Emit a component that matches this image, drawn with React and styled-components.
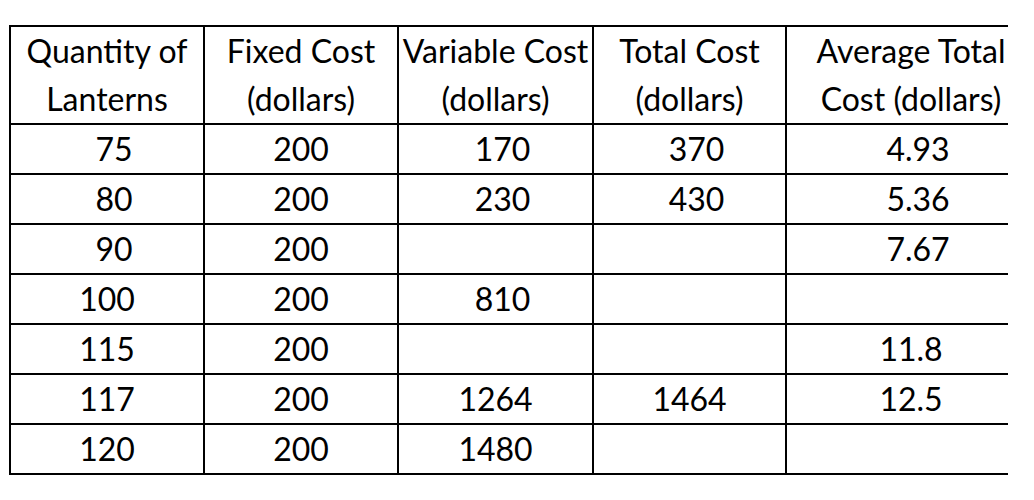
import React from "react";
import styled, { createGlobalStyle } from "styled-components";

const Global = createGlobalStyle`
  html, body { margin: 0; padding: 0; background: #ffffff; }
  body { font-family: Lato, "Open Sans", "Liberation Sans", sans-serif; color: #000; }
`;

const Frame = styled.div`
  width: 1008px;
  height: 500px;
  overflow: hidden;
  padding: 25px 0 0 9px;
  box-sizing: border-box;
`;

const Table = styled.table`
  width: 1028px;
  min-width: 1028px;
  border-collapse: separate;
  border-spacing: 0;
  border-top: 2px solid #000;
  border-left: 2px solid #000;
  table-layout: fixed;
  font-family: Lato, "Open Sans", "Liberation Sans", sans-serif;
  font-size: 32px;
  color: #000;
`;

const Col = styled.col`
  width: ${(p) => p.$w}px;
`;

const HeadCell = styled.th`
  font-weight: 400;
  text-align: center;
  vertical-align: top;
  line-height: 48px;
  height: 97px;
  padding: 0;
  box-sizing: border-box;
  white-space: nowrap;
  border-right: 2px solid #000;
  border-bottom: 2px solid #000;
`;

const Cell = styled.td`
  text-align: center;
  line-height: 48px;
  height: 48px;
  padding: 0 0 0 ${(p) => (p.$shift ? "14px" : "0")};
  white-space: nowrap;
  border-right: 2px solid #000;
  border-bottom: 2px solid #000;
`;

const widths = [194, 194, 195, 193, 250];

const headers = [
  ["Quantity of", "Lanterns"],
  ["Fixed Cost", "(dollars)"],
  ["Variable Cost", "(dollars)"],
  ["Total Cost", "(dollars)"],
  ["Average Total", "Cost (dollars)"],
];

const rows = [
  [["75", 1], ["200"], ["170", 1], ["370", 1], ["4.93", 1]],
  [["80", 1], ["200"], ["230", 1], ["430", 1], ["5.36", 1]],
  [["90", 1], ["200"], [""], [""], ["7.67", 1]],
  [["100"], ["200"], ["810", 1], [""], [""]],
  [["115"], ["200"], [""], [""], ["11.8"]],
  [["117"], ["200"], ["1264"], ["1464"], ["12.5"]],
  [["120"], ["200"], ["1480"], [""], [""]],
];

export default function App() {
  return (
    <>
      <Global />
      <Frame>
        <Table>
          <colgroup>
            {widths.map((w, i) => (
              <Col key={i} $w={w} />
            ))}
          </colgroup>
          <thead>
            <tr>
              {headers.map((h, i) => (
                <HeadCell key={i}>
                  {h[0]}
                  <br />
                  {h[1]}
                </HeadCell>
              ))}
            </tr>
          </thead>
          <tbody>
            {rows.map((r, i) => (
              <tr key={i}>
                {r.map(([v, s], j) => (
                  <Cell key={j} $shift={!!s}>
                    {v}
                  </Cell>
                ))}
              </tr>
            ))}
          </tbody>
        </Table>
      </Frame>
    </>
  );
}
